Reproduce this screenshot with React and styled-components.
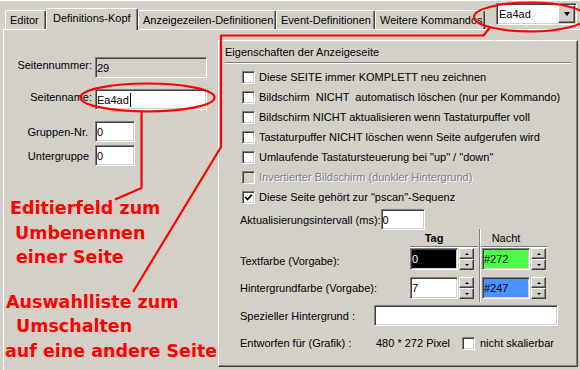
import React from "react";
import styled, { createGlobalStyle } from "styled-components";

const Global = createGlobalStyle`
  html, body { margin: 0; padding: 0; background: #d4d0c8; }
  body {
    font-family: "Liberation Sans", Arial, sans-serif;
    font-size: 11px;
    color: #000;
  }
  * { box-sizing: border-box; }
`;

const Screen = styled.div`
  position: relative;
  width: 580px;
  height: 370px;
  overflow: hidden;
  background: #d4d0c8;
  box-shadow: inset 0 1px 0 #ffffff;
`;

const TabBar = styled.div`
  display: flex;
  align-items: flex-end;
  height: 29px;
  padding-left: 5px;
  padding-right: 3px;
`;

const Tab = styled.div`
  position: relative;
  z-index: ${(p) => (p.$active ? 2 : 1)};
  flex: none;
  width: ${(p) => p.$w}px;
  height: ${(p) => (p.$active ? 22 : 19)}px;
  margin-bottom: ${(p) => (p.$active ? -1 : 0)}px;
  padding-left: ${(p) => (p.$active ? 6 : 4)}px;
  padding-bottom: ${(p) => (p.$active ? 3 : 0)}px;
  background: #d4d0c8;
  border-top: 1px solid #ffffff;
  border-left: 1px solid #ffffff;
  border-right: 1px solid #404040;
  border-top-left-radius: 2px;
  border-top-right-radius: 2px;
  box-shadow: inset -1px 0 0 #808080;
  display: flex;
  align-items: center;
  white-space: nowrap;
  overflow: hidden;
`;

const Combo = styled.div`
  align-self: flex-start;
  margin-top: 3px;
  margin-left: auto;
  width: 81px;
  height: 22px;
  background: #ffffff;
  border-top: 1px solid #808080;
  border-left: 1px solid #808080;
  border-bottom: 1px solid #ffffff;
  border-right: 1px solid #ffffff;
  box-shadow: inset 1px 1px 0 #404040, inset -1px -1px 0 #d4d0c8;
  display: flex;
  align-items: center;
  padding-left: 2px;
`;

const ComboText = styled.span`
  flex: 1;
`;

const RaisedButton = styled.div`
  flex: none;
  width: ${(p) => p.$w}px;
  height: ${(p) => p.$h}px;
  margin-right: ${(p) => p.$mr || 0}px;
  background: #d4d0c8;
  border-top: 1px solid #ffffff;
  border-left: 1px solid #ffffff;
  border-right: 1px solid #404040;
  border-bottom: 1px solid #404040;
  box-shadow: inset -1px -1px 0 #808080;
  display: flex;
  align-items: center;
  justify-content: center;
`;

const Arrow = styled.span`
  width: 0;
  height: 0;
  border-left: ${(p) => p.$s}px solid transparent;
  border-right: ${(p) => p.$s}px solid transparent;
  ${(p) =>
    p.$up
      ? `border-bottom: ${p.$h}px solid #000;`
      : `border-top: ${p.$h}px solid #000;`}
`;

const Page = styled.div`
  display: flex;
  margin-left: 3px;
  height: 345px;
  border-top: 1px solid #ffffff;
  border-left: 1px solid #ffffff;
`;

const LeftCol = styled.div`
  flex: none;
  width: 214px;
  display: flex;
  flex-direction: column;
`;

const FieldRow = styled.div`
  display: flex;
  align-items: center;
  height: 21px;
  margin-top: ${(p) => p.$mt}px;
`;

const FormLabel = styled.div`
  flex: none;
  width: 88px;
  margin-right: 3px;
  text-align: right;
  white-space: nowrap;
  padding-right: ${(p) => p.$pr || 0}px;
  padding-bottom: ${(p) => p.$up || 0}px;
`;

const Field = styled.div`
  flex: none;
  position: relative;
  width: ${(p) => p.$w}px;
  height: ${(p) => p.$h || 21}px;
  margin-left: ${(p) => p.$ml || 0}px;
  background: ${(p) => p.$bg || "#ffffff"};
  color: ${(p) => p.$fg || "#000"};
  border-top: 1px solid #808080;
  border-left: 1px solid #808080;
  border-bottom: 1px solid #ffffff;
  border-right: 1px solid #ffffff;
  box-shadow: inset 1px 1px 0 #404040, inset -1px -1px 0 #d4d0c8;
  padding-left: 1px;
  display: flex;
  align-items: center;
  white-space: nowrap;
`;

const Caret = styled.span`
  display: inline-block;
  width: 1px;
  height: 14px;
  margin-left: 1px;
  background: #000;
`;

const Note = styled.div`
  margin-top: ${(p) => p.$mt}px;
  color: #ff0000;
  font-family: "DejaVu Sans", sans-serif;
  font-weight: bold;
  font-size: 17.5px;
  line-height: 24.5px;
  white-space: nowrap;
`;

const NoteLine = styled.div`
  padding-left: ${(p) => p.$indent}px;
`;

const Panel = styled.div`
  flex: none;
  margin-top: 10px;
  width: 360px;
  height: 327px;
  background: #d4d0c8;
  border-top: 1px solid #ffffff;
  border-left: 1px solid #ffffff;
  border-right: 1px solid #404040;
  border-bottom: 1px solid #404040;
  box-shadow: inset -1px -1px 0 #808080;
  display: flex;
  flex-direction: column;
`;

const PanelTitle = styled.div`
  margin-top: 5px;
  padding-left: 6px;
  height: 13px;
  line-height: 13px;
  white-space: nowrap;
`;

const Etched = styled.div`
  margin: 3px 6px 0 6px;
  height: 2px;
  border-top: 1px solid #808080;
  border-bottom: 1px solid #ffffff;
`;

const CheckList = styled.div`
  margin-top: 3px;
  display: flex;
  flex-direction: column;
`;

const CheckRow = styled.div`
  display: flex;
  align-items: center;
  height: 20px;
  padding-left: 23px;
  white-space: pre;
  color: ${(p) => (p.$disabled ? "#808080" : "#000")};
  text-shadow: ${(p) => (p.$disabled ? "1px 1px 0 #ffffff" : "none")};
`;

const Box = styled.span`
  flex: none;
  width: 13px;
  height: 13px;
  margin-right: ${(p) => p.$mr ?? 4}px;
  background: ${(p) => (p.$disabled ? "#d4d0c8" : "#ffffff")};
  border-top: 1px solid #808080;
  border-left: 1px solid #808080;
  border-bottom: 1px solid #ffffff;
  border-right: 1px solid #ffffff;
  box-shadow: inset 1px 1px 0 #404040, inset -1px -1px 0 #d4d0c8;
  display: flex;
  align-items: center;
  justify-content: center;
`;

const InlineRow = styled.div`
  display: flex;
  align-items: center;
  height: ${(p) => p.$h || 21}px;
  margin-top: ${(p) => p.$mt || 0}px;
  padding-left: 21px;
  white-space: nowrap;
`;

const InlineLabel = styled.span`
  flex: none;
  min-width: ${(p) => p.$w}px;
  white-space: pre;
`;

const ColorGrid = styled.div`
  display: grid;
  grid-template-columns: 191px 68px 3px 67px;
  grid-template-rows: 18px 29px 25px;
  align-items: start;
`;

const ColHead = styled.div`
  grid-row: 1;
  grid-column: ${(p) => p.$col};
  height: 18px;
  border-bottom: 1px solid #ffffff;
  box-shadow: inset 0 -1px 0 #808080;
  padding-left: ${(p) => p.$ml}px;
  padding-bottom: 1px;
`;

const ColHeadText = styled.div`
  width: 48px;
  height: 16px;
  line-height: 16px;
  text-align: center;
  font-weight: ${(p) => (p.$bold ? "bold" : "normal")};
`;

const VSep = styled.div`
  grid-column: 3;
  grid-row: 1 / 4;
  margin-top: -1px;
  margin-left: 1px;
  width: 2px;
  height: 73px;
  border-left: 1px solid #808080;
  border-right: 1px solid #ffffff;
`;

const GridLabel = styled.div`
  grid-column: 1;
  grid-row: ${(p) => p.$row};
  height: 22px;
  line-height: 22px;
  padding-left: 21px;
  padding-top: ${(p) => p.$dy || 0}px;
  white-space: nowrap;
`;

const SpinCell = styled.div`
  grid-column: ${(p) => p.$col};
  grid-row: ${(p) => p.$row};
  display: flex;
  align-items: flex-start;
`;

const Spin = styled.div`
  flex: none;
  margin-left: 1px;
  display: flex;
  flex-direction: column;
`;

const Check = () => (
  <svg width="9" height="9" viewBox="0 0 9 9">
    <polyline points="1.2,4 3.5,6.5 7.8,1.6" fill="none" stroke="#000" strokeWidth="1.7" />
  </svg>
);

const SpinButtons = () => (
  <Spin>
    <RaisedButton $w={15} $h={11}>
      <Arrow $up $s={2} $h={2} />
    </RaisedButton>
    <RaisedButton $w={15} $h={11}>
      <Arrow $s={2} $h={2} />
    </RaisedButton>
  </Spin>
);

const Overlay = styled.svg`
  position: absolute;
  left: 0;
  top: 0;
  z-index: 10;
  pointer-events: none;
`;

const checks = [
  { t: "Diese SEITE immer KOMPLETT neu zeichnen" },
  { t: "Bildschirm  NICHT  automatisch löschen (nur per Kommando)" },
  { t: "Bildschirm NICHT aktualisieren wenn Tastaturpuffer voll" },
  { t: "Tastaturpuffer NICHT löschen wenn Seite aufgerufen wird" },
  { t: "Umlaufende Tastatursteuerung bei \"up\" / \"down\"" },
  { t: "Invertierter Bildschirm (dunkler Hintergrund)", disabled: true },
  { t: "Diese Seite gehört zur \"pscan\"-Sequenz", checked: true },
];

export default function App() {
  return (
    <Screen>
      <Global />
      <TabBar>
        <Tab $w={41}>Editor</Tab>
        <Tab $w={92} $active>Definitions-Kopf</Tab>
        <Tab $w={138}>Anzeigezeilen-Definitionen</Tab>
        <Tab $w={99}>Event-Definitionen</Tab>
        <Tab $w={110}>Weitere Kommandos</Tab>
        <Combo>
          <ComboText>Ea4ad</ComboText>
          <RaisedButton $w={17} $h={18} $mr={1}>
            <Arrow $s={3.5} $h={4} />
          </RaisedButton>
        </Combo>
      </TabBar>
      <Page>
        <LeftCol>
          <FieldRow $mt={27}>
            <FormLabel $up={5}>Seitennummer:</FormLabel>
            <Field $w={112} $bg="#d4d0c8">29</Field>
          </FieldRow>
          <FieldRow $mt={11}>
            <FormLabel $up={5}>Seitenname:</FormLabel>
            <Field $w={112}>
              Ea4ad
              <Caret />
            </Field>
          </FieldRow>
          <FieldRow $mt={11}>
            <FormLabel $pr={4}>Gruppen-Nr.</FormLabel>
            <Field $w={40}>0</Field>
          </FieldRow>
          <FieldRow $mt={3}>
            <FormLabel $pr={3}>Untergruppe</FormLabel>
            <Field $w={40}>0</Field>
          </FieldRow>
          <Note $mt={30}>
            <NoteLine $indent={6}>Editierfeld zum</NoteLine>
            <NoteLine $indent={11}>Umbenennen</NoteLine>
            <NoteLine $indent={12}>einer Seite</NoteLine>
          </Note>
          <Note $mt={20}>
            <NoteLine $indent={2}>Auswahlliste zum</NoteLine>
            <NoteLine $indent={12}>Umschalten</NoteLine>
            <NoteLine $indent={1}>auf eine andere Seite</NoteLine>
          </Note>
        </LeftCol>
        <Panel>
          <PanelTitle>Eigenschaften der Anzeigeseite</PanelTitle>
          <Etched />
          <CheckList>
            {checks.map((c) => (
              <CheckRow key={c.t} $disabled={c.disabled}>
                <Box $disabled={c.disabled}>{c.checked && <Check />}</Box>
                {c.t}
              </CheckRow>
            ))}
          </CheckList>
          <InlineRow $mt={2}>
            <InlineLabel $w={138}>Aktualisierungsintervall (ms):</InlineLabel>
            <Field $w={44}>0</Field>
          </InlineRow>
          <ColorGrid>
            <ColHead $col={2} $ml={0}>
              <ColHeadText $bold>Tag</ColHeadText>
            </ColHead>
            <VSep />
            <ColHead $col={4} $ml={1}>
              <ColHeadText>Nacht</ColHeadText>
            </ColHead>
            <GridLabel $row={2} $dy={2}>Textfarbe (Vorgabe):</GridLabel>
            <SpinCell $col={2} $row={2}>
              <Field $w={48} $h={22} $bg="#000000" $fg="#ffffff">0</Field>
              <SpinButtons />
            </SpinCell>
            <SpinCell $col={4} $row={2}>
              <Field $w={48} $h={22} $ml={1} $bg="#49ff49">#272</Field>
              <SpinButtons />
            </SpinCell>
            <GridLabel $row={3}>Hintergrundfarbe (Vorgabe):</GridLabel>
            <SpinCell $col={2} $row={3}>
              <Field $w={48} $h={22}>7</Field>
              <SpinButtons />
            </SpinCell>
            <SpinCell $col={4} $row={3}>
              <Field $w={48} $h={22} $ml={1} $bg="#4992ff">#247</Field>
              <SpinButtons />
            </SpinCell>
          </ColorGrid>
          <InlineRow $mt={3}>
            <InlineLabel $w={134}>Spezieller Hintergrund :</InlineLabel>
            <Field $w={184} />
          </InlineRow>
          <InlineRow $mt={7} $h={20}>
            <InlineLabel $w={136}>Entworfen für (Grafik) :</InlineLabel>
            <InlineLabel $w={86}>480 * 272 Pixel</InlineLabel>
            <Box $mr={5} />
            nicht skalierbar
          </InlineRow>
        </Panel>
      </Page>
      <Overlay width="580" height="370" viewBox="0 0 580 370">
        <g fill="none" stroke="#ff0000" strokeWidth="2.2" strokeLinejoin="round">
          <ellipse cx="147.5" cy="97.5" rx="67" ry="14" />
          <polyline points="141.5,111.5 141.5,188 115,199.5" />
          <ellipse cx="530" cy="17" rx="56" ry="14.5" />
          <polyline points="490,27.5 483.5,35.5 221,35.5 221,147 133,292" />
        </g>
      </Overlay>
    </Screen>
  );
}
